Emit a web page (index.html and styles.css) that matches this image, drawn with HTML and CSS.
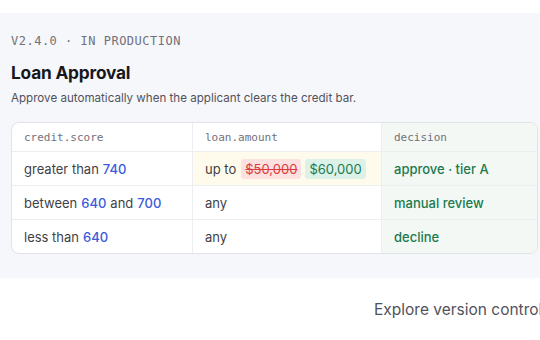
FILE: index.html
```html
<!DOCTYPE html>
<html>
<head>
<meta charset="utf-8">
<link rel="stylesheet" href="styles.css">
</head>
<body>
<section class="panel">
  <div class="eyebrow">v2.4.0 · in production</div>
  <h1 class="title">Loan Approval</h1>
  <p class="desc">Approve automatically when the applicant clears the credit bar.</p>
  <div class="card">
    <div class="grid">
      <div class="cell head">credit.score</div>
      <div class="cell head">loan.amount</div>
      <div class="cell head out">decision</div>

      <div class="cell">greater than <b class="num">740</b></div>
      <div class="cell changed">up to <span class="pill del">$50,000</span><span class="pill add">$60,000</span></div>
      <div class="cell out res">approve · tier A</div>

      <div class="cell">between <b class="num">640</b> and <b class="num">700</b></div>
      <div class="cell">any</div>
      <div class="cell out res">manual review</div>

      <div class="cell last">less than <b class="num">640</b></div>
      <div class="cell last">any</div>
      <div class="cell out res last">decline</div>
    </div>
  </div>
</section>
<div class="footer">
  <span class="explore">Explore version control</span>
</div>
</body>
</html>
```
FILE: styles.css
```css
html, body {
  margin: 0;
  padding: 0;
  background: #ffffff;
  overflow: hidden;
}
body {
  font-family: Inter, "Noto Sans", sans-serif;
  width: 540px;
}
.panel {
  margin-top: 13px;
  background: #f6f7fb;
  padding: 20px 2px 24px 11px;
}
.eyebrow {
  font-family: "DejaVu Sans Mono", monospace;
  font-size: 12px;
  letter-spacing: 0.5px;
  text-transform: uppercase;
  color: #71717a;
  line-height: 16px;
}
.title {
  margin: 13px 0 0;
  font-size: 17.3px;
  font-weight: 700;
  color: #18181b;
  line-height: 22px;
  letter-spacing: -0.2px;
}
.desc {
  margin: 6px 0 0;
  font-size: 11.6px;
  color: #52525b;
  line-height: 16px;
}
.card {
  margin-top: 16px;
  width: 527px;
  box-sizing: border-box;
  background: #ffffff;
  border: 1px solid #e1e3e8;
  border-radius: 8px;
  overflow: hidden;
}
.grid {
  display: grid;
  grid-template-columns: 181px 189px 1fr;
}
.cell {
  display: flex;
  align-items: center;
  height: 33px;
  padding: 0 12px;
  font-size: 13px;
  color: #3f3f46;
  border-bottom: 1px solid #eceef1;
  border-right: 1px solid #eceef1;
  white-space: nowrap;
}
.cell.last { border-bottom: none; }
.cell.out { border-right: none; background: #f3f8f5; }
.head {
  height: 28px;
  font-family: "DejaVu Sans Mono", monospace;
  font-size: 11px;
  color: #71717a;
}
.num {
  font-weight: 500;
  color: #3b5bdb;
  margin: 0 4px;
}
.num:last-child { margin-right: 0; }
.changed { background: #fefbec; }
.pill {
  padding: 2px 4px;
  border-radius: 3px;
  margin-left: 5px;
  line-height: 16px;
}
.pill.add { margin-left: 4px; }
.pill.del {
  background: #fde1e1;
  color: #dc3b3b;
  text-decoration: line-through;
}
.pill.add {
  background: #dcf1e8;
  color: #1b7a4e;
}
.res {
  color: #1b7a4e;
  font-weight: 500;
}
.footer {
  padding: 21px 0 0 374px;
  white-space: nowrap;
}
.explore {
  font-size: 15.5px;
  line-height: 19px;
  color: #52525b;
}
```
